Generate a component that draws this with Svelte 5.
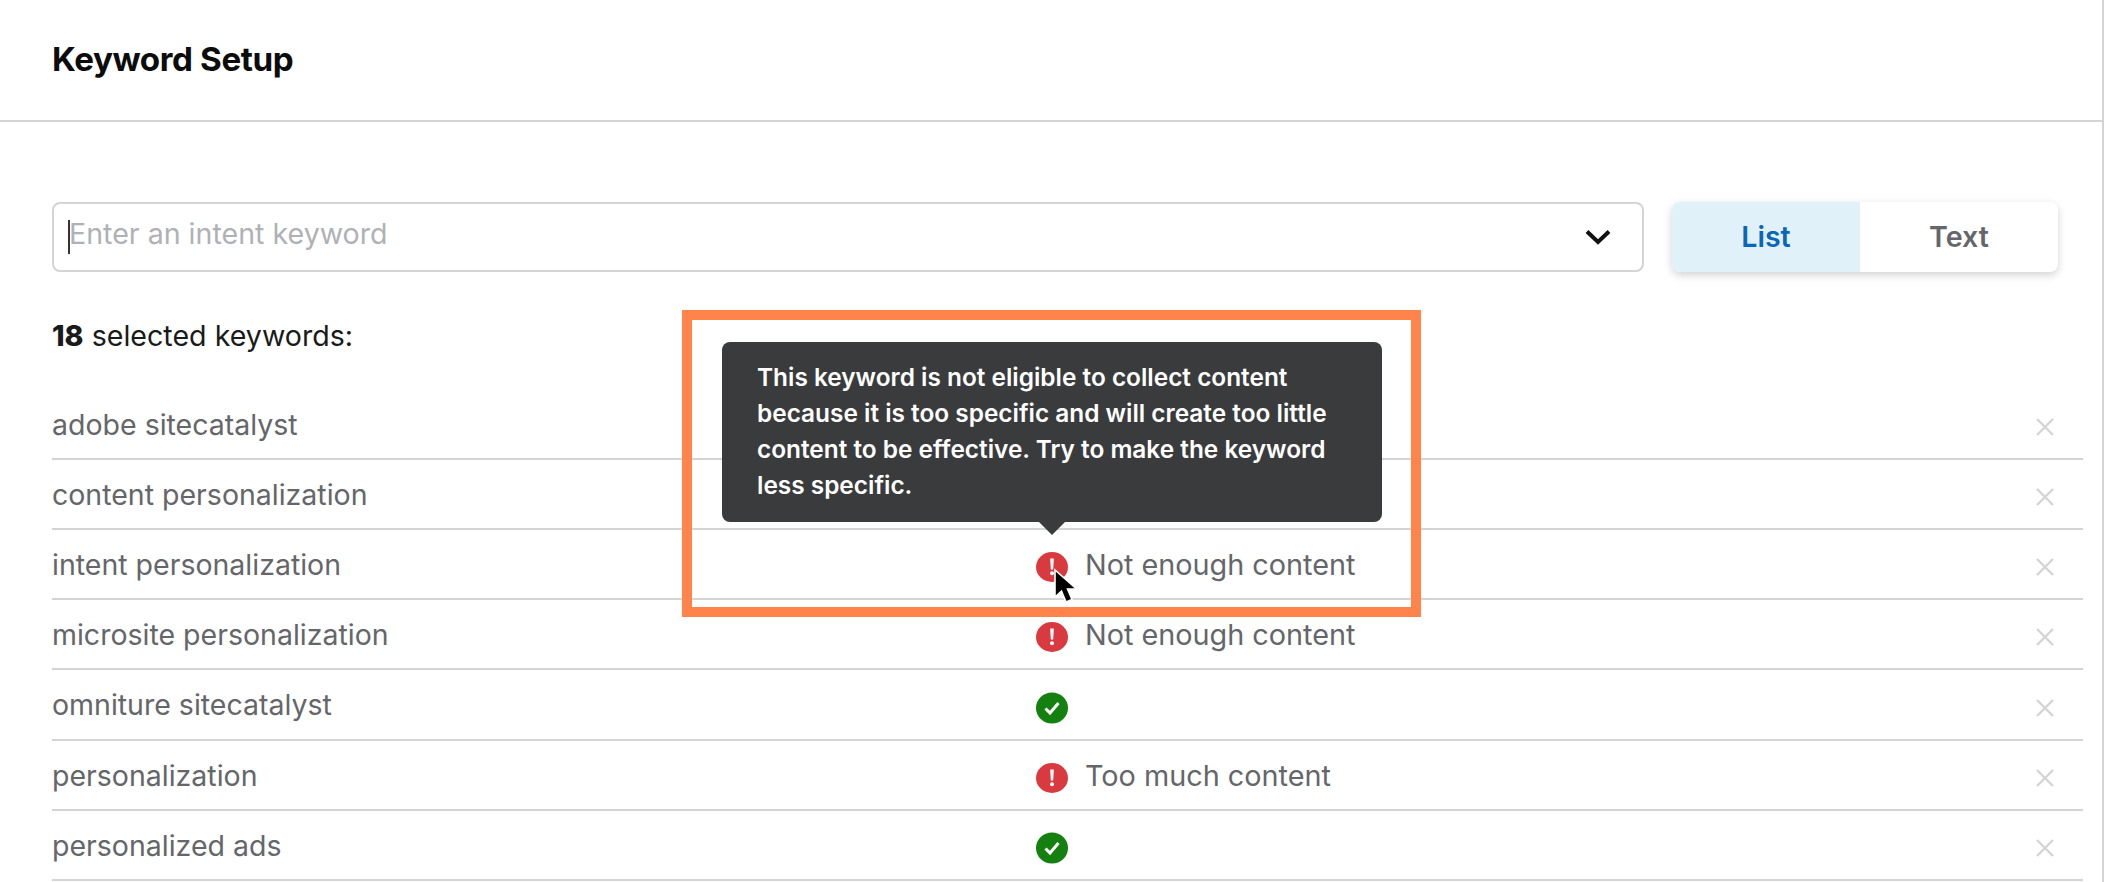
<script>
  const rows = [
    { name: 'adobe sitecatalyst' },
    { name: 'content personalization' },
    { name: 'intent personalization', status: 'bad', note: 'Not enough content' },
    { name: 'microsite personalization', status: 'bad', note: 'Not enough content' },
    { name: 'omniture sitecatalyst', status: 'ok' },
    { name: 'personalization', status: 'bad', note: 'Too much content' },
    { name: 'personalized ads', status: 'ok' }
  ];
</script>

<div class="panel">
  <header class="head"><h1>Keyword Setup</h1></header>
  <div class="body">
    <div class="controls">
      <div class="combo">
        <span class="caret"></span>
        <span class="placeholder">Enter an intent keyword</span>
        <svg class="chev" width="28" height="18" viewBox="0 0 28 18"><path d="M3 3.5 14 14 25 3.5" fill="none" stroke="#111" stroke-width="4"/></svg>
      </div>
      <div class="toggle">
        <div class="tab active">List</div>
        <div class="tab">Text</div>
      </div>
    </div>
    <p class="count"><b>18</b> selected keywords:</p>
    <div class="list">
      {#each rows as r}
        <div class="row">
          <span class="name">{r.name}</span>
          <span class="status">
            {#if r.status === 'bad'}
              <svg class="ic" width="32" height="32" viewBox="0 0 32 32"><ellipse cx="16" cy="16" rx="16" ry="15" fill="#d93a40"/><path d="M14.2 7.5h3.6l-.6 11h-2.4z" fill="#fff"/><circle cx="16" cy="22.3" r="2" fill="#fff"/></svg>
            {:else if r.status === 'ok'}
              <svg class="ic" width="32" height="32" viewBox="0 0 32 32"><ellipse cx="16" cy="16" rx="16" ry="15.5" fill="#14800f"/><path d="M9.5 16.5l4.5 4.5 8.5-10" fill="none" stroke="#fff" stroke-width="3"/></svg>
            {/if}
            {#if r.note}<span class="note">{r.note}</span>{/if}
          </span>
          <svg class="x" width="20" height="20" viewBox="0 0 20 20"><path d="M2 2 18 18M18 2 2 18" stroke="#d4d4d4" stroke-width="2.4"/></svg>
        </div>
      {/each}
    </div>
  </div>

  <div class="frame"></div>
  <div class="tip">
    This keyword is not eligible to collect content because it is too specific and will create too little content to be effective. Try to make the keyword less specific.
  </div>
  <svg class="cursor" width="26" height="38" viewBox="0 0 26 38"><path d="M2 2v27l6.5-6 4.5 11 6-2.5-4.5-10.5h9z" fill="#000" stroke="#fff" stroke-width="1.6"/></svg>
</div>

<style>
  :global(body) { margin: 0; background: #fff; }
  .panel {
    position: relative;
    width: 2104px;
    height: 882px;
    overflow: hidden;
    box-sizing: border-box;
    border-right: 2px solid #d4d4d4;
    font-family: Inter, "Open Sans", sans-serif;
    color: #65666a;
    font-variant-ligatures: none;
  }
  .head {
    height: 118px;
    padding-bottom: 2px;
    border-bottom: 2px solid #d4d4d4;
    display: flex;
    align-items: center;
    padding-left: 52px;
    margin-right: -2px;
    box-sizing: content-box;
  }
  h1 { margin: 0; font-size: 33.2px; font-weight: 700; letter-spacing: -0.4px; color: #0c0c0c; }
  .body { padding: 80px 19px 0 52px; }
  .controls { display: flex; gap: 28px; padding-right: 25px; }
  .combo {
    flex: 1;
    height: 70px;
    box-sizing: border-box;
    border: 2px solid #d4d4d4;
    border-radius: 8px;
    display: flex;
    align-items: center;
    padding: 0 30px 0 14px;
  }
  .caret { width: 2px; height: 34px; background: #333; }
  .placeholder { flex: 1; font-size: 28.6px; color: #b0b1b6; margin-left: -1px; padding-bottom: 7px; }
  .toggle {
    width: 386px;
    height: 70px;
    display: flex;
    border-radius: 8px;
    overflow: hidden;
    box-shadow: 0 3px 8px rgba(0,0,0,.18);
  }
  .tab { display: flex; align-items: center; justify-content: center; font-size: 28.6px; font-weight: 600; flex: 1; padding-bottom: 2px; }
  .tab.active { flex: 0 0 188px; background: #e1f1fa; color: #0a67b8; }
  .count { margin: 46px 0 0; font-size: 28.6px; line-height: 36px; color: #1a1a1a; }
  .count b { font-weight: 800; }
  .list { margin-top: 36px; }
  .row {
    height: 70px;
    box-sizing: border-box;
    border-bottom: 2px solid #d4d4d4;
    display: grid;
    grid-template-columns: 984px 1fr 48px;
    align-items: center;
    font-size: 28.5px;
  }
  .row:nth-child(5) { height: 71px; }
  .status { display: flex; align-items: center; gap: 17px; }
  .note { font-size: 28.8px; }
  .ic, .x { position: relative; top: 3px; }
  .frame {
    position: absolute;
    left: 682px; top: 310px;
    width: 739px; height: 307px;
    box-sizing: border-box;
    border: 10px solid #ff844b;
  }
  .tip {
    position: absolute;
    left: 722px; top: 342px;
    width: 660px; height: 180px;
    box-sizing: border-box;
    padding: 17px 35px;
    background: #3a3b3d;
    border-radius: 8px;
    color: #fff;
    font-size: 24.4px;
    font-weight: 600;
    line-height: 36px;
  }
  .tip::after {
    content: '';
    position: absolute;
    left: 317px; top: 180px;
    border: 13px solid transparent;
    border-bottom: 0;
    border-top-color: #3a3b3d;
  }
  .cursor { position: absolute; left: 1053px; top: 568px; }
</style>
